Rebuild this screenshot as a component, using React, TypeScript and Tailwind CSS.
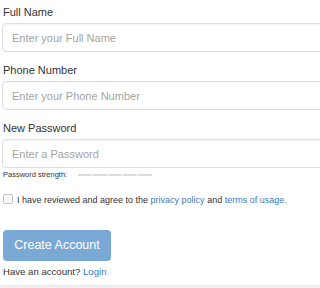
export default function App() {
  const fields = [
    { label: "Full Name", placeholder: "Enter your Full Name", type: "text" },
    { label: "Phone Number", placeholder: "Enter your Phone Number", type: "tel" },
    { label: "New Password", placeholder: "Enter a Password", type: "password" },
  ];

  return (
    <div className="w-full h-[288px] overflow-hidden bg-white font-['Liberation_Sans',Arial,sans-serif] text-[#333]">
      <div className="w-[calc(100%+40px)] pt-[5px] pl-[2px]">
        {fields.map((f, i) => (
          <div key={f.label} className={i < fields.length - 1 ? "mb-[11px]" : ""}>
            <label className="block ml-[1px] mb-[4px] text-[11px] leading-[14px]">{f.label}</label>
            <input
              type={f.type}
              placeholder={f.placeholder}
              className="block w-full h-[29px] px-[9px] border border-[#dedede] rounded-[4px] bg-white text-[11px] placeholder:text-[#a3a3a3] shadow-[inset_0_1px_1px_rgba(0,0,0,0.04)] outline-none"
            />
          </div>
        ))}

        {/* strength meter */}
        <div className="flex items-center ml-[1px] mt-[2px] h-[10px]">
          <span className="text-[7.5px] leading-[10px] w-[75px]">Password strength:</span>
          <div className="flex gap-[1px]">
            {[0, 1, 2, 3, 4].map((n) => (
              <div key={n} className="w-[14px] h-[2px] bg-[#dcdcdc]" />
            ))}
          </div>
        </div>

        <div className="flex items-center ml-[1px] mt-[14px] h-[12px]">
          <span className="w-[10px] h-[10px] mb-[2px] border border-[#bdbdbd] rounded-[2px] bg-white" />
          <span className="ml-[4px] text-[9px] leading-[12px] whitespace-nowrap">
            I have reviewed and agree to the <a className="text-[#3a7cbc]">privacy policy</a> and{" "}
            <a className="text-[#3a7cbc]">terms of usage.</a>
          </span>
        </div>

        <button className="mt-[24px] ml-[1px] w-[108px] h-[31px] rounded-[4px] bg-[#7aa9d6] text-white text-[12.5px]">
          Create Account
        </button>

        <div className="ml-[1px] mt-[5px] text-[9.6px] leading-[12px]">
          Have an account? <a className="text-[#3a7cbc]">Login</a>
        </div>
      </div>
      <div className="mt-[7px] h-[10px] bg-[#f2f2f2] border-t border-[#e8e8e8]" />
    </div>
  );
}
